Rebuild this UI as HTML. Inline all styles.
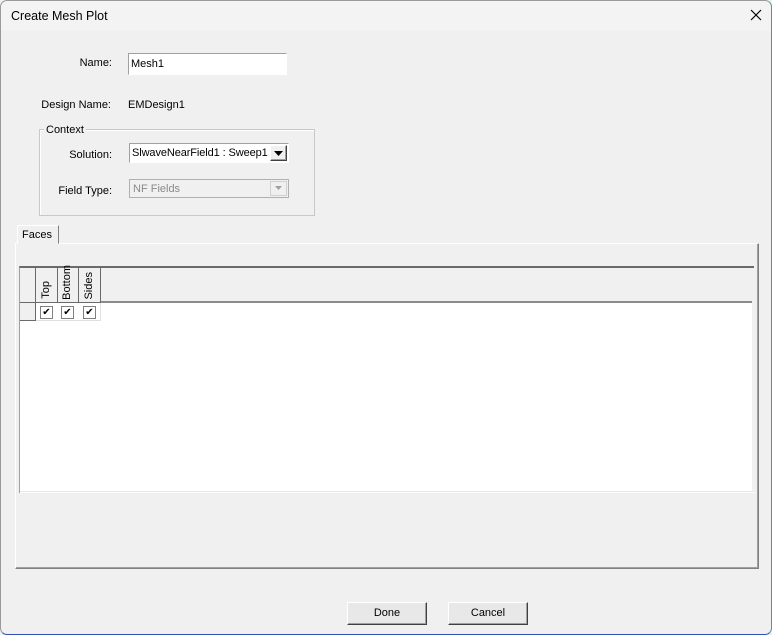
<!DOCTYPE html>
<html><head><style>
*{margin:0;padding:0;box-sizing:border-box}
body{width:772px;height:635px;background:#f0f0f0;font-family:"Liberation Sans",sans-serif;font-size:11px;color:#000;position:relative;overflow:hidden}
.a{position:absolute}
.win{left:0;top:0;width:772px;height:635px;border:1px solid #9a9a9a;border-radius:7px;border-right-color:#2aa8a0;border-bottom-color:#3050b0}
.lbl{text-align:right;width:120px}
.sunk{border:1px solid;border-color:#a0a0a0 #fff #fff #a0a0a0;background:#fff}
.btn{background:#e8e8e8;border:1px solid;border-color:#fff #404040 #404040 #fff;box-shadow:inset -1px -1px 0 #a0a0a0;text-align:center;line-height:20px;font-size:11px}
.dd{border:1px solid;border-color:#fff #404040 #404040 #fff;background:#f0f0f0;box-shadow:inset -1px -1px 0 #a0a0a0}
.hc{border-right:1px solid #6a6a6a;border-bottom:1px solid #6a6a6a;background:#f0f0f0}
.cb{width:13px;height:13px;border:1px solid #808080;background:#fff;font-size:10px;line-height:11px;text-align:center}
.vt{writing-mode:vertical-rl;transform:rotate(180deg);font-size:11px}
</style></head><body>
<div class="a win"></div>
<div class="a" style="left:1px;top:1px;width:770px;height:30px;background:#f3f3f3;border-radius:7px 7px 0 0"></div>
<div class="a" style="left:11px;top:9px;font-size:12.5px">Create Mesh Plot</div>
<svg class="a" style="left:750px;top:9px" width="12" height="12"><path d="M1 1L11 11M11 1L1 11" stroke="#000" stroke-width="1.2"/></svg>

<div class="a lbl" style="left:-8px;top:57px">Name:</div>
<div class="a sunk" style="left:128px;top:53px;width:159px;height:22px;padding:4px 2px">Mesh1</div>

<div class="a lbl" style="left:-9px;top:99px">Design Name:</div>
<div class="a" style="left:128px;top:99px">EMDesign1</div>

<div class="a" style="left:39px;top:129px;width:276px;height:87px;border:1px solid #c8c8c8;box-shadow:inset 1px 1px 0 #fff"></div>
<div class="a" style="left:44px;top:124px;background:#f0f0f0;padding:0 2px">Context</div>

<div class="a lbl" style="left:-8px;top:149px">Solution:</div>
<div class="a sunk" style="left:129px;top:143px;width:160px;height:20px;padding:3px 2px;font-size:11px;letter-spacing:-0.1px;white-space:nowrap;overflow:hidden">SlwaveNearField1 : Sweep1</div>
<div class="a dd" style="left:270px;top:145px;width:17px;height:16px"></div>
<svg class="a" style="left:274px;top:151px" width="9" height="5"><path d="M0 0H9L4.5 5Z" fill="#000"/></svg>

<div class="a lbl" style="left:-8px;top:185px">Field Type:</div>
<div class="a" style="left:129px;top:179px;width:160px;height:19px;border:1px solid #b0b0b0;background:#f0f0f0;padding:3px 3px;color:#8a8a8a">NF Fields</div>
<div class="a" style="left:270px;top:181px;width:17px;height:15px;border:1px solid #d0d0d0"></div>
<svg class="a" style="left:275px;top:186px" width="7" height="4"><path d="M0 0H7L3.5 4Z" fill="#a0a0a0"/></svg>

<div class="a" style="left:15px;top:243px;width:744px;height:326px;border:1px solid;border-color:#fff #808080 #808080 #fff;box-shadow:inset -1px -1px 0 #a0a0a0"></div>
<div class="a" style="left:17px;top:225px;width:42px;height:19px;border:1px solid;border-color:#fff #808080 #f0f0f0 #fff;background:#f0f0f0;padding:3px 4px">Faces</div>

<div class="a" style="left:19px;top:266px;width:735px;height:227px;border-left:1px solid #a0a0a0;border-top:2px solid #6a6a6a;background:#fff"></div>
<div class="a" style="left:20px;top:268px;width:733px;height:35px;background:#f0f0f0;border-bottom:2px solid #8a8a8a"></div>
<div class="a" style="left:752px;top:268px;width:2px;height:224px;background:#f0f0f0"></div>
<div class="a" style="left:20px;top:491px;width:733px;height:1px;background:#e8e8e8"></div>
<div class="a hc" style="left:20px;top:268px;width:16px;height:35px"></div>
<div class="a hc" style="left:36px;top:268px;width:22px;height:35px"><div class="vt a" style="left:4px;bottom:3px">Top</div></div>
<div class="a hc" style="left:58px;top:268px;width:21px;height:35px"><div class="vt a" style="left:3px;bottom:2px">Bottom</div></div>
<div class="a hc" style="left:79px;top:268px;width:22px;height:35px"><div class="vt a" style="left:4px;bottom:2px">Sides</div></div>
<div class="a hc" style="left:20px;top:303px;width:16px;height:18px"></div>
<div class="a cb" style="left:40px;top:306px">✔</div>
<div class="a cb" style="left:61px;top:306px">✔</div>
<div class="a cb" style="left:83px;top:306px">✔</div>
<div class="a" style="left:36px;top:320px;width:65px;height:1px;background:#e0e0e0"></div>
<div class="a" style="left:100px;top:303px;width:1px;height:18px;background:#e0e0e0"></div>

<div class="a btn" style="left:347px;top:602px;width:80px;height:23px">Done</div>
<div class="a btn" style="left:448px;top:602px;width:80px;height:23px">Cancel</div>
</body></html>
